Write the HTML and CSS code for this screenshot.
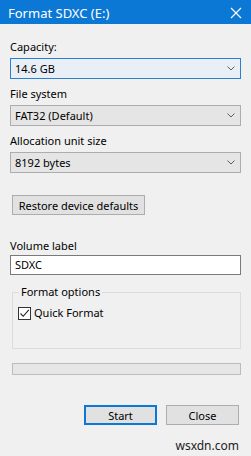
FILE: index.html
```html
<!DOCTYPE html>
<html lang="en">
<head>
    <meta charset="UTF-8">
    <title>Format SDXC (E:)</title>
    <link rel="stylesheet" href="styles.css">
</head>
<body>
    <div class="titlebar">
        <span class="title">Format SDXC (E:)</span>
        <svg class="close-x" width="12" height="12" viewBox="0 0 12 12">
            <path d="M1 1 L11 11 M11 1 L1 11" stroke="#fff" stroke-width="1.2" fill="none"/>
        </svg>
    </div>

    <div class="content">
        <label class="field-label">Capacity:</label>
        <div class="select focused">
            <span>14.6 GB</span>
            <svg class="chevron" width="8" height="5" viewBox="0 0 8 5"><path d="M0.5 0.5 L4 4 L7.5 0.5" stroke="#606060" fill="none"/></svg>
        </div>

        <label class="field-label gap">File system</label>
        <div class="select">
            <span>FAT32 (Default)</span>
            <svg class="chevron" width="8" height="5" viewBox="0 0 8 5"><path d="M0.5 0.5 L4 4 L7.5 0.5" stroke="#606060" fill="none"/></svg>
        </div>

        <label class="field-label gap">Allocation unit size</label>
        <div class="select">
            <span>8192 bytes</span>
            <svg class="chevron" width="8" height="5" viewBox="0 0 8 5"><path d="M0.5 0.5 L4 4 L7.5 0.5" stroke="#606060" fill="none"/></svg>
        </div>

        <button class="btn restore-btn">Restore device defaults</button>

        <label class="field-label volume">Volume label</label>
        <div class="textbox">SDXC</div>

        <fieldset class="group">
            <legend>Format options</legend>
            <div class="check-row">
                <span class="checkbox">
                    <svg width="11" height="11" viewBox="0 0 11 11"><path d="M1.5 5.5 L4.2 8.3 L9.8 1.8" stroke="#222" stroke-width="1.1" fill="none"/></svg>
                </span>
                <span>Quick Format</span>
            </div>
        </fieldset>

        <div class="progress"></div>

        <div class="actions">
            <button class="btn action default">Start</button>
            <button class="btn action">Close</button>
        </div>

        <div class="watermark">wsxdn.com</div>
    </div>
</body>
</html>
```

FILE: styles.css
```css
* {
    margin: 0;
    padding: 0;
    box-sizing: border-box;
}

body {
    font-family: 'Noto Sans', sans-serif;
    font-size: 11px;
    color: #000;
    background-color: #f0f0f0;
    width: 251px;
    height: 456px;
    overflow: hidden;
}

.titlebar {
    height: 24px;
    background-color: #0a78d4;
    color: #fff;
    display: flex;
    align-items: center;
    justify-content: space-between;
    padding: 0 9px 0 8px;
}

.title {
    font-size: 13px;
    line-height: 16px;
    margin-top: 2px;
}

.close-x {
    margin-top: 2px;
}

.content {
    padding: 15px 10px 0 10px;
}

.field-label {
    display: block;
    line-height: 16px;
    margin-bottom: 3px;
}

.field-label.gap {
    margin-top: 7px;
}

.select {
    height: 21px;
    border: 1px solid #adadad;
    background-color: #e5e5e5;
    display: flex;
    align-items: center;
    justify-content: space-between;
    padding: 0 5px 0 4px;
    line-height: 16px;
}

.select.focused {
    border-color: #2b7fd0;
    background-color: #e8eff7;
}

.btn {
    font-family: 'Noto Sans', sans-serif;
    font-size: 11px;
    color: #000;
    background-color: #e1e1e1;
    border: 1px solid #adadad;
    height: 20px;
}

.restore-btn {
    display: block;
    margin: 22px 0 0 2px;
    width: 133px;
}

.field-label.volume {
    margin-top: 23px;
    margin-bottom: 1px;
}

.textbox {
    height: 20px;
    background-color: #fff;
    border: 1px solid #7a7a7a;
    padding: 0 4px;
    line-height: 18px;
}

.group {
    margin: 9px 0 0 2px;
    width: 229px;
    height: 65px;
    border: 1px solid #dcdcdc;
    padding: 0 5px;
}

.group legend {
    padding: 0 2px;
    margin-left: 1px;
    line-height: 16px;
}

.check-row {
    display: flex;
    align-items: center;
    gap: 3px;
    line-height: 16px;
    margin-top: 5px;
}

.checkbox {
    width: 13px;
    height: 13px;
    border: 1px solid #333;
    background-color: #fff;
    display: flex;
    align-items: center;
    justify-content: center;
}

.progress {
    margin: 14px 0 0 2px;
    width: 229px;
    height: 12px;
    border: 1px solid #bcbcbc;
    background-color: #e6e6e6;
}

.actions {
    display: flex;
    justify-content: flex-end;
    gap: 9px;
    margin-top: 30px;
    padding-right: 2px;
}

.action {
    width: 73px;
}

.action.default {
    border: 2px solid #0a78d4;
}

.watermark {
    text-align: right;
    padding-right: 2px;
    margin-top: 13px;
    font-size: 12px;
    color: #222;
    line-height: 16px;
}
```
